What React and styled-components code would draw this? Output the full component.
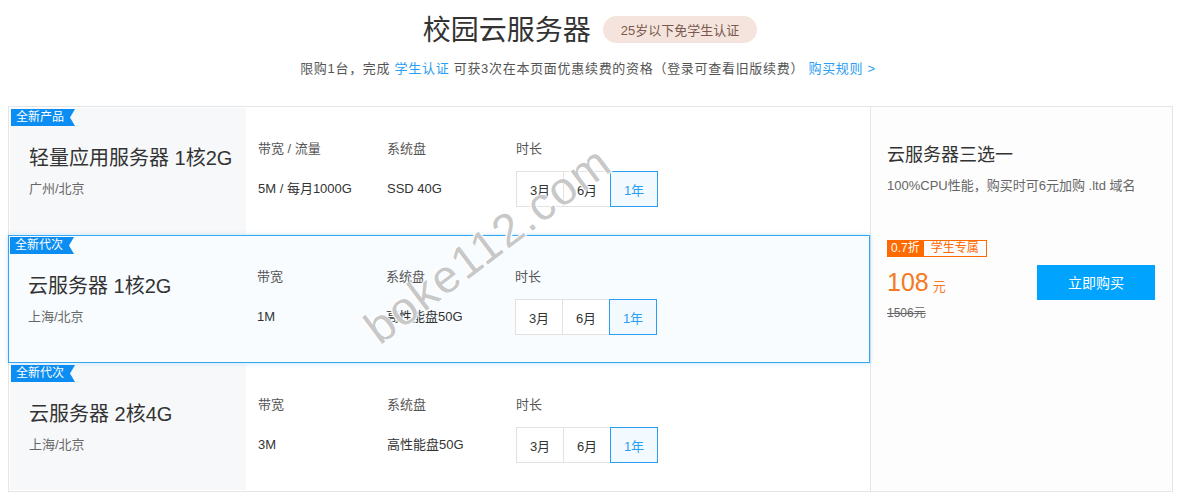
import React, { useState } from 'react';
import styled, { createGlobalStyle } from 'styled-components';

const GlobalStyle = createGlobalStyle`
  html, body {
    margin: 0;
    padding: 0;
    background: #fff;
    font-family: "Liberation Sans", "Noto Sans CJK SC", sans-serif;
    color: #333;
  }
`;

const products = [
    {
        id: 'lighthouse',
        tag: '全新产品',
        name: '轻量应用服务器 1核2G',
        region: '广州/北京',
        bandLabel: '带宽 / 流量',
        band: '5M / 每月1000G',
        disk: 'SSD 40G',
    },
    {
        id: 'cvm-1c2g',
        tag: '全新代次',
        name: '云服务器 1核2G',
        region: '上海/北京',
        bandLabel: '带宽',
        band: '1M',
        disk: '高性能盘50G',
    },
    {
        id: 'cvm-2c4g',
        tag: '全新代次',
        name: '云服务器 2核4G',
        region: '上海/北京',
        bandLabel: '带宽',
        band: '3M',
        disk: '高性能盘50G',
    },
];

const durations = ['3月', '6月', '1年'];

const App = () => {
    const [selected, setSelected] = useState('cvm-1c2g');
    const [picked, setPicked] = useState({ lighthouse: '1年', 'cvm-1c2g': '1年', 'cvm-2c4g': '1年' });

    return (
        <Page>
            <GlobalStyle />
            <Header>
                <TitleRow>
                    <Title>校园云服务器</Title>
                    <AgeBadge>25岁以下免学生认证</AgeBadge>
                </TitleRow>
                <Notice>
                    限购1台，完成 <NoticeLink>学生认证</NoticeLink> 可获3次在本页面优惠续费的资格（登录可查看旧版续费） <NoticeLink>购买规则 &gt;</NoticeLink>
                </Notice>
            </Header>

            <Board>
                <List>
                    {products.map((p) => (
                        <Row key={p.id} $active={selected === p.id} onClick={() => setSelected(p.id)}>
                            <Tag>{p.tag}</Tag>
                            <NameCell $active={selected === p.id}>
                                <Name>{p.name}</Name>
                                <Region>{p.region}</Region>
                            </NameCell>
                            <Spec>
                                <SpecLabel>{p.bandLabel}</SpecLabel>
                                <SpecValue>{p.band}</SpecValue>
                            </Spec>
                            <Spec>
                                <SpecLabel>系统盘</SpecLabel>
                                <SpecValue>{p.disk}</SpecValue>
                            </Spec>
                            <Spec>
                                <SpecLabel>时长</SpecLabel>
                                <Durations>
                                    {durations.map((d) => (
                                        <DurationButton
                                            key={d}
                                            $on={picked[p.id] === d}
                                            onClick={() => setPicked({ ...picked, [p.id]: d })}
                                        >
                                            {d}
                                        </DurationButton>
                                    ))}
                                </Durations>
                            </Spec>
                        </Row>
                    ))}
                </List>

                <Side>
                    <SideTitle>云服务器三选一</SideTitle>
                    <SideDesc>100%CPU性能，购买时可6元加购 .ltd 域名</SideDesc>
                    <BuyRow>
                        <PriceBox>
                            <Badges>
                                <Discount>0.7折</Discount>
                                <Exclusive>学生专属</Exclusive>
                            </Badges>
                            <Price>
                                108<Unit>元</Unit>
                            </Price>
                            <OldPrice>1506元</OldPrice>
                        </PriceBox>
                        <BuyButton>立即购买</BuyButton>
                    </BuyRow>
                </Side>
            </Board>

            <Watermark>boke112.com</Watermark>
        </Page>
    );
};

export default App;

const Page = styled.div`
  position: relative;
  width: 1182px;
  height: 500px;
  overflow: hidden;
`;

const Header = styled.div`
  display: flex;
  flex-direction: column;
  align-items: center;
  padding-top: 13px;
  height: 106px;
  box-sizing: border-box;
`;

const TitleRow = styled.div`
  display: flex;
  align-items: center;
  gap: 12px;
  margin-left: -2px;
`;

const Title = styled.h1`
  margin: 0;
  padding-top: 4px;
  font-size: 28px;
  font-weight: normal;
  line-height: 28px;
  color: #333;
`;

const AgeBadge = styled.span`
  display: inline-flex;
  align-items: center;
  height: 27px;
  padding: 0 18px;
  border-radius: 14px;
  background: #f4e4dd;
  color: #7a5a4f;
  font-size: 13px;
`;

const Notice = styled.p`
  margin: 15px 0 0 -6px;
  font-size: 13px;
  line-height: 18px;
  letter-spacing: 0.7px;
  color: #555;
`;

const NoticeLink = styled.span`
  color: #2a9df4;
`;

const Board = styled.div`
  display: flex;
  margin: 0 9px 0 8px;
  border: 1px solid #e5e5e5;
  height: 386px;
  box-sizing: border-box;
`;

const List = styled.div`
  display: flex;
  flex-direction: column;
  width: 861px;
`;

const Row = styled.div`
  position: relative;
  display: grid;
  grid-template-columns: 248px 129px 129px 1fr;
  height: 128px;
  box-sizing: border-box;
  border: 1px solid ${(p) => (p.$active ? '#35a6f4' : 'transparent')};
  margin: ${(p) => (p.$active ? '0 0 0 -1px' : '0')};
  background: ${(p) => (p.$active ? '#f8fcff' : '#fff')};
  box-shadow: ${(p) => (p.$active ? '0 0 4px rgba(53, 166, 244, 0.35)' : 'none')};
  z-index: ${(p) => (p.$active ? 1 : 0)};
  cursor: pointer;
`;

const Tag = styled.span`
  position: absolute;
  top: 1px;
  left: 1px;
  height: 17px;
  line-height: 17px;
  padding: 0 11px 0 5px;
  font-size: 12px;
  color: #fff;
  background: #0b8df2;
  clip-path: polygon(0 0, 100% 0, calc(100% - 5px) 50%, 100% 100%, 0 100%);
`;

const NameCell = styled.div`
  display: flex;
  flex-direction: column;
  padding: 37px 0 0 19px;
  background: ${(p) => (p.$active ? 'transparent' : '#f7f8fa')};
  margin-right: 12px;
`;

const Name = styled.div`
  font-size: 20px;
  line-height: 26px;
  color: #333;
`;

const Region = styled.div`
  margin-top: 8px;
  font-size: 13px;
  line-height: 20px;
  color: #666;
`;

const Spec = styled.div`
  display: flex;
  flex-direction: column;
  padding-top: 32px;
`;

const SpecLabel = styled.div`
  font-size: 13px;
  line-height: 18px;
  color: #555;
`;

const SpecValue = styled.div`
  margin-top: 13px;
  font-size: 13px;
  line-height: 36px;
  color: #333;
`;

const Durations = styled.div`
  display: flex;
  margin-top: 13px;
`;

const DurationButton = styled.div`
  width: 48px;
  height: 36px;
  box-sizing: border-box;
  display: flex;
  align-items: center;
  justify-content: center;
  font-size: 13px;
  margin-left: -1px;
  border: 1px solid ${(p) => (p.$on ? '#2a9df4' : '#e2e2e2')};
  background: ${(p) => (p.$on ? '#f2f9ff' : '#fff')};
  color: ${(p) => (p.$on ? '#2a9df4' : '#333')};
  z-index: ${(p) => (p.$on ? 1 : 0)};
  &:first-child {
    margin-left: 0;
  }
`;

const Side = styled.div`
  flex: 1;
  display: flex;
  flex-direction: column;
  border-left: 1px solid #e5e5e5;
  padding: 36px 17px 0 16px;
  background: #fdfdfd;
`;

const SideTitle = styled.div`
  font-size: 18px;
  line-height: 24px;
  color: #333;
`;

const SideDesc = styled.div`
  margin-top: 10px;
  font-size: 13px;
  line-height: 18px;
  color: #666;
`;

const BuyRow = styled.div`
  display: flex;
  align-items: center;
  justify-content: space-between;
  margin-top: 45px;
`;

const PriceBox = styled.div`
  display: flex;
  flex-direction: column;
`;

const Badges = styled.div`
  display: flex;
  height: 17px;
  font-size: 12px;
  line-height: 17px;
`;

const Discount = styled.span`
  padding: 0 4px;
  background: #ff6a00;
  color: #fff;
`;

const Exclusive = styled.span`
  padding: 0 7px;
  border: 1px solid #ff6a00;
  border-left: none;
  color: #ff6a00;
  line-height: 15px;
`;

const Price = styled.div`
  margin-top: 8px;
  font-size: 25px;
  line-height: 34px;
  color: #f47a24;
`;

const Unit = styled.span`
  margin-left: 4px;
  font-size: 13px;
`;

const OldPrice = styled.div`
  font-size: 12px;
  line-height: 18px;
  color: #666;
  text-decoration: line-through;
`;

const BuyButton = styled.button`
  width: 118px;
  height: 35px;
  border: none;
  background: #00a4ff;
  color: #fff;
  font-family: inherit;
  font-size: 14px;
  cursor: pointer;
  margin-top: 2px;
`;

const Watermark = styled.div`
  position: absolute;
  left: 370px;
  top: 306px;
  font-size: 46px;
  letter-spacing: 2px;
  color: rgba(110, 110, 110, 0.4);
  text-shadow: 0 0 2px #fff, 1px 1px 1px #fff, -1px -1px 1px #fff;
  transform: rotate(-37deg);
  transform-origin: left center;
  pointer-events: none;
  z-index: 5;
`;
